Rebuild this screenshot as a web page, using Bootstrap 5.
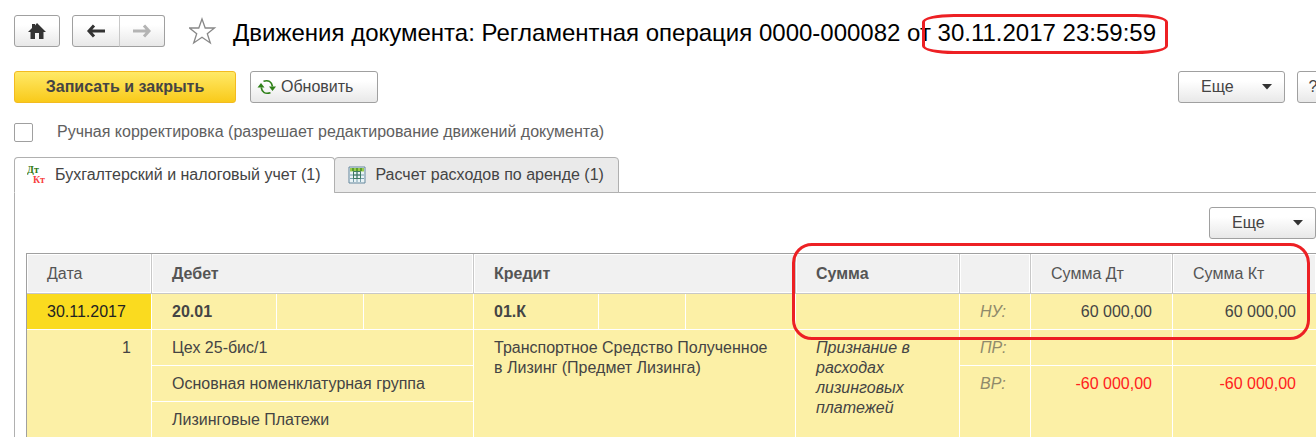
<!DOCTYPE html>
<html lang="ru">
<head>
<meta charset="utf-8">
<meta name="viewport" content="width=device-width, initial-scale=1">
<title>Движения документа</title>
<link href="https://cdn.jsdelivr.net/npm/bootstrap@5.3.0/dist/css/bootstrap.min.css" rel="stylesheet">
<style>
  body { font-family: "Liberation Sans", Arial, sans-serif; font-size: 16px; line-height: 20px; color: #444; background: #fff; overflow-x: hidden; }
  .page-pad { padding-left: 14px; }
  .btn-soft { --bs-btn-color: #444; --bs-btn-font-size: 16px; --bs-btn-line-height: 20px; --bs-btn-border-color: #a0a0a0; --bs-btn-hover-border-color: #888; --bs-btn-hover-color: #222; --bs-btn-border-radius: 3px; background: linear-gradient(#fff 30%, #e8e8e8); height: 32px; padding: 0 6px; }
  .btn-save { --bs-btn-color: #444; --bs-btn-font-size: 16px; --bs-btn-border-color: #f3bb20; --bs-btn-hover-border-color: #dda500; --bs-btn-border-radius: 3px; background: linear-gradient(#ffe967, #f9ca1a); width: 222px; height: 32px; padding: 0; }
  .btn-home { width: 46px; }
  .btn-step { width: 48px; }
  .btn-step + .btn-step { border-left-color: #c8c8c8; width: 46px; }
  .btn-refresh { width: 128px; }
  .btn-more { width: 107px; padding-left: 22px; padding-right: 12px; }
  .btn-help { width: 32px; margin-right: -13px; }
  .head-bar { padding-top: 13px; }
  .doc-title { font-size: 24px; line-height: 32px; color: #000; white-space: nowrap; }
  .mark-date { position: absolute; inset: -3px -12px -5px -16px; border: 3px solid #ed2024; border-radius: 32px / 8px; pointer-events: none; }
  .tools-bar { margin-top: 22px; gap: 14px; }
  .manual-row { margin-top: 19px; min-height: 20px; color: #606060; gap: 24px; }
  .manual-row .form-check-input { width: 19px; height: 19px; margin: 0; border: 1px solid #a0a0a0; border-radius: 2px; }
  .doc-tabs { margin-top: 15px; --bs-nav-tabs-border-color: #b0b0b0; padding-left: 0; }
  .doc-tabs .nav-link { height: 36px; padding: 0 14px 0 12px; color: #444; border: 1px solid #b0b0b0; border-radius: 4px 4px 0 0; background: #eaeaea; }
  .doc-tabs .nav-item + .nav-item .nav-link { margin-left: -1px; }
  .doc-tabs .nav-link.active { background: #fff; color: #444; border-color: #b0b0b0 #b0b0b0 #fff; }
  .doc-panel { border-left: 1px solid #b0b0b0; padding: 14px 0 0 11px; }
  .table-wrap { margin-top: 14px; }
  .moves { table-layout: fixed; width: 100%; border-collapse: separate; border-spacing: 0; border-top: 1px solid #a0a0a0; border-left: 1px solid #a0a0a0; margin: 0; }
  .moves th { height: 40px; padding: 0 20px; background: #f1f1f1; border-right: 1px solid #c8c8c8; border-bottom: 1px solid #c8c8c8; box-shadow: inset 0 0 0 1px #fff; color: #555; vertical-align: middle; }
  .moves td { height: 36px; padding: 8px 20px 0; background: #fcf0a6; border-right: 1px solid #fff; border-bottom: 1px solid #fff; vertical-align: top; }
  .moves td.cell-active { background: #fadb1f; color: #222; padding-right: 0; }
  .moves th:last-child, .moves td.last-col { border-right: 0; }
  .moves .kind { color: #8f8a6b; font-style: italic; }
  .moves .minus { color: #ff2020; }
  .moves .cell-bottom { border-bottom: 0; }
  .c-key { width: 125px; } .c-sub { width: 87px; } .c-sum { width: 164px; } .c-kind { width: 71px; } .c-val { width: 142px; } .c-end { width: 143px; }
  .mark-sums { position: absolute; top: -10px; right: 6px; width: 518px; height: 97px; border: 3px solid #ed2024; border-radius: 20px; pointer-events: none; }
</style>
</head>
<body>
<header class="page-pad head-bar d-flex align-items-center">
  <button type="button" class="btn btn-soft btn-home d-flex align-items-center justify-content-center" aria-label="Домой">
    <svg width="20" height="18" viewBox="0 0 20 18" fill="#333"><path d="M10 1 19 10H16.500V17H12V11H8V17H3.500V10H1L5 6V2H8V3.500Z"/></svg>
  </button>
  <div class="btn-group ms-2 ps-1">
    <button type="button" class="btn btn-soft btn-step d-flex align-items-center justify-content-center" aria-label="Назад">
      <svg width="20" height="14" viewBox="0 0 20 14" fill="none" stroke="#333" stroke-width="3"><path d="M19 7H4M8 1.500 3 7l5 5.500"/></svg>
    </button>
    <button type="button" class="btn btn-soft btn-step d-flex align-items-center justify-content-center" aria-label="Вперед">
      <svg width="20" height="14" viewBox="0 0 20 14" fill="none" stroke="#b4b4b4" stroke-width="3"><path d="M1 7H16M12 1.500 17 7l-5 5.500"/></svg>
    </button>
  </div>
  <svg class="ms-4" width="28" height="28" viewBox="0 0 28 28" fill="none" stroke="#888" stroke-width="1.300"><path d="M13 2 16.200 11H25.500L18.300 16.700 21.300 26 13 20.300 4.700 26 7.700 16.700 .500 11H9.800Z"/></svg>
  <h1 class="doc-title fw-normal mb-0 ms-3 pt-1">Движения документа: Регламентная операция 0000-000082 от <span class="position-relative d-inline-block">30.11.2017 23:59:59<span class="mark-date"></span></span></h1>
</header>

<div class="page-pad tools-bar d-flex align-items-center">
  <button type="button" class="btn btn-save fw-bold">Записать и закрыть</button>
  <button type="button" class="btn btn-soft btn-refresh d-flex align-items-center">
    <svg class="me-1" width="20" height="18" viewBox="0 0 20 18" fill="none" stroke="#2e8018" stroke-width="1.600"><path d="M6.500 3.200Q14 1 15.500 8.500M13.500 14.800Q5.500 17 4.200 9.500"/><path d="M12 8.500h7l-3.500 4.500zM.500 9.500h7L4 5z" fill="#2e8018" stroke="none"/></svg>
    Обновить
  </button>
  <div class="d-flex ms-auto">
    <button type="button" class="btn btn-soft btn-more d-flex align-items-center justify-content-between me-2">Еще
      <svg width="10" height="6" viewBox="0 0 10 6" fill="#333"><path d="M0 0h10L5 5.500z"/></svg>
    </button>
    <button type="button" class="btn btn-soft btn-help ms-1">?</button>
  </div>
</div>

<div class="page-pad manual-row d-flex align-items-center">
  <input class="form-check-input" type="checkbox" id="manual">
  <label for="manual">Ручная корректировка (разрешает редактирование движений документа)</label>
</div>

<div class="page-pad">
  <ul class="nav nav-tabs doc-tabs" role="tablist">
    <li class="nav-item" role="presentation"><button type="button" role="tab" aria-selected="true" class="nav-link active d-flex align-items-center">
      <svg class="me-2" width="20" height="22" viewBox="0 0 20 22" font-family="Liberation Serif, serif" font-weight="bold" font-size="10"><text x="0" y="9" fill="#2f7a10">Дт</text><text x="6" y="19" fill="#f84040">Кт</text></svg>
      Бухгалтерский и налоговый учет (1)</button></li>
    <li class="nav-item" role="presentation"><button type="button" role="tab" aria-selected="false" class="nav-link d-flex align-items-center">
      <svg class="me-2" width="20" height="18" viewBox="0 0 20 18"><path d="M2 1h16v16H2z" fill="#e9f3f6" stroke="#64879d"/><path d="M3 2h14v3.500H3z" fill="#9acb4e"/><path d="M6.500 2v14M10 2v14M13.500 2v14M3 9h14M3 12.500h14" stroke="#799fae"/><path d="M6.500 5.500h7v7h-7zM10 5.500v7M6.500 9h7" fill="none" stroke="#3e7b61"/><path d="M5 2h2v3H5zM9 2h2v3H9zM13 2h2v3h-2z" fill="#5b9f2d"/></svg>
      Расчет расходов по аренде (1)</button></li>
  </ul>
  <main class="doc-panel">
    <div class="d-flex justify-content-end">
      <button type="button" class="btn btn-soft btn-more d-flex align-items-center justify-content-between">Еще
        <svg width="10" height="6" viewBox="0 0 10 6" fill="#333"><path d="M0 0h10L5 5.500z"/></svg>
      </button>
    </div>
    <div class="table-wrap position-relative">
      <table class="moves">
        <colgroup><col class="c-key"><col class="c-key"><col class="c-sub"><col><col class="c-key"><col class="c-sub"><col><col class="c-sum"><col class="c-kind"><col class="c-val"><col class="c-end"></colgroup>
        <thead>
          <tr><th class="fw-normal">Дата</th><th colspan="3">Дебет</th><th colspan="3">Кредит</th><th>Сумма</th><th></th><th class="fw-normal">Сумма Дт</th><th class="fw-normal">Сумма Кт</th></tr>
        </thead>
        <tbody>
          <tr><td class="cell-active">30.11.2017</td><td class="fw-bold">20.01</td><td></td><td></td><td class="fw-bold">01.К</td><td></td><td></td><td></td><td class="kind">НУ:</td><td class="text-end">60 000,00</td><td class="text-end last-col">60 000,00</td></tr>
          <tr><td rowspan="3" class="text-end cell-bottom">1</td><td colspan="3">Цех 25-бис/1</td><td colspan="3" rowspan="3" class="cell-bottom">Транспортное Средство Полученное в Лизинг (Предмет Лизинга)</td><td rowspan="3" class="fst-italic cell-bottom">Признание в расходах лизинговых платежей</td><td class="kind">ПР:</td><td></td><td class="last-col"></td></tr>
          <tr><td colspan="3">Основная номенклатурная группа</td><td rowspan="2" class="kind cell-bottom">ВР:</td><td rowspan="2" class="text-end minus cell-bottom">-60 000,00</td><td rowspan="2" class="text-end minus last-col cell-bottom">-60 000,00</td></tr>
          <tr><td colspan="3" class="cell-bottom">Лизинговые Платежи</td></tr>
        </tbody>
      </table>
      <div class="mark-sums"></div>
    </div>
  </main>
</div>
<script src="https://cdn.jsdelivr.net/npm/bootstrap@5.3.0/dist/js/bootstrap.bundle.min.js"></script>
</body>
</html>
